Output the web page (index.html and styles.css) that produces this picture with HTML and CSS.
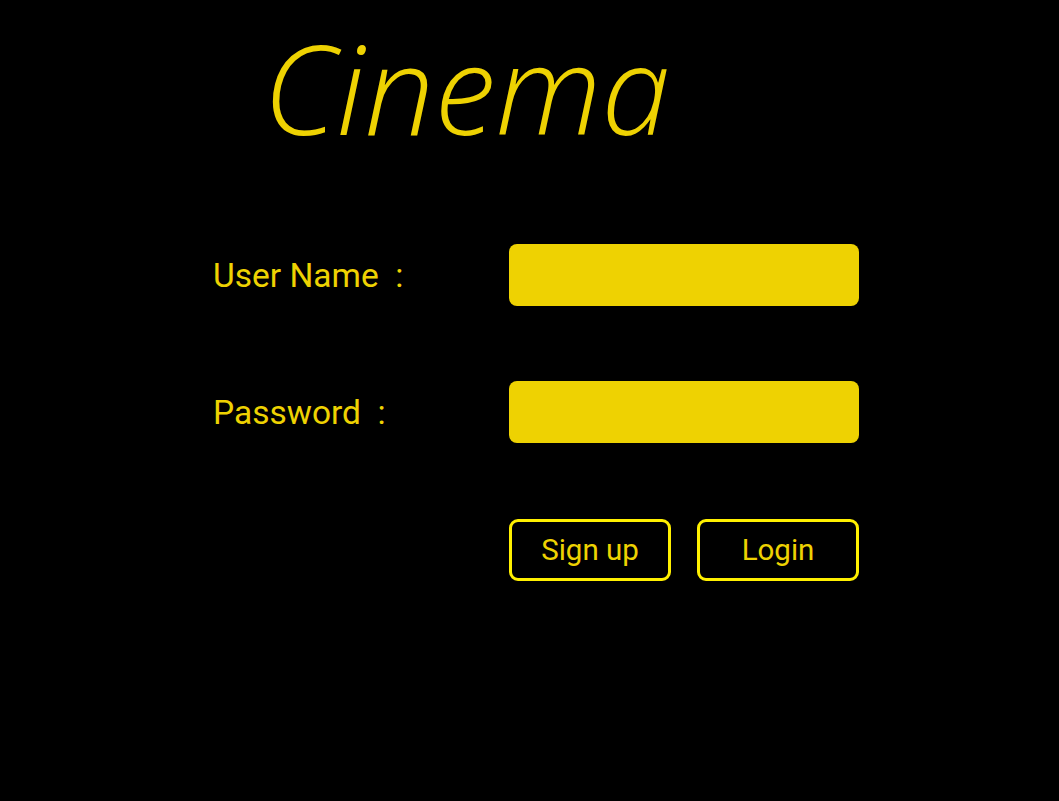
FILE: index.html
```html
<!DOCTYPE html>
<html>
<head>
<meta charset="utf-8">
<link rel="stylesheet" href="styles.css">
</head>
<body>
<div class="page">
  <h1 class="title">Cinema</h1>
  <form class="form">
    <label class="label" for="u">User Name&nbsp;&nbsp;:</label>
    <input class="field" id="u" type="text">
    <label class="label" for="p">Password&nbsp;&nbsp;:</label>
    <input class="field" id="p" type="password">
    <div class="spacer"></div>
    <div class="buttons">
      <button type="button" class="btn">Sign up</button>
      <button type="button" class="btn">Login</button>
    </div>
  </form>
</div>
</body>
</html>
```
FILE: styles.css
```css
html, body {
  margin: 0;
  padding: 0;
  background: #000;
  height: 100%;
}
.page {
  width: 1059px;
  height: 801px;
  box-sizing: border-box;
  padding-top: 12px;
}
.title {
  margin: 0 0 0 263px;
  font-family: "Open Sans", sans-serif;
  font-weight: 300;
  font-style: italic;
  font-size: 124px;
  line-height: 150px;
  color: #EED202;
  height: 150px;
}
.form {
  display: grid;
  grid-template-columns: 296px 350px;
  row-gap: 75px;
  margin-left: 213px;
  margin-top: 82px;
  align-items: center;
}
.label {
  font-family: Roboto, sans-serif;
  font-size: 33.5px;
  color: #EED202;
}
.field {
  width: 350px;
  height: 62px;
  box-sizing: border-box;
  border: none;
  border-radius: 8px;
  background: #EED202;
  outline: none;
  margin: 0;
  padding: 0 12px;
}
.buttons {
  display: flex;
  gap: 26px;
  margin-top: 1px;
}
.btn {
  width: 162px;
  height: 62px;
  box-sizing: border-box;
  border: 3px solid #FFF000;
  border-radius: 9px;
  background: #000;
  color: #EED202;
  font-family: Roboto, sans-serif;
  font-size: 29.5px;
  padding: 0;
  margin: 0;
}
```
